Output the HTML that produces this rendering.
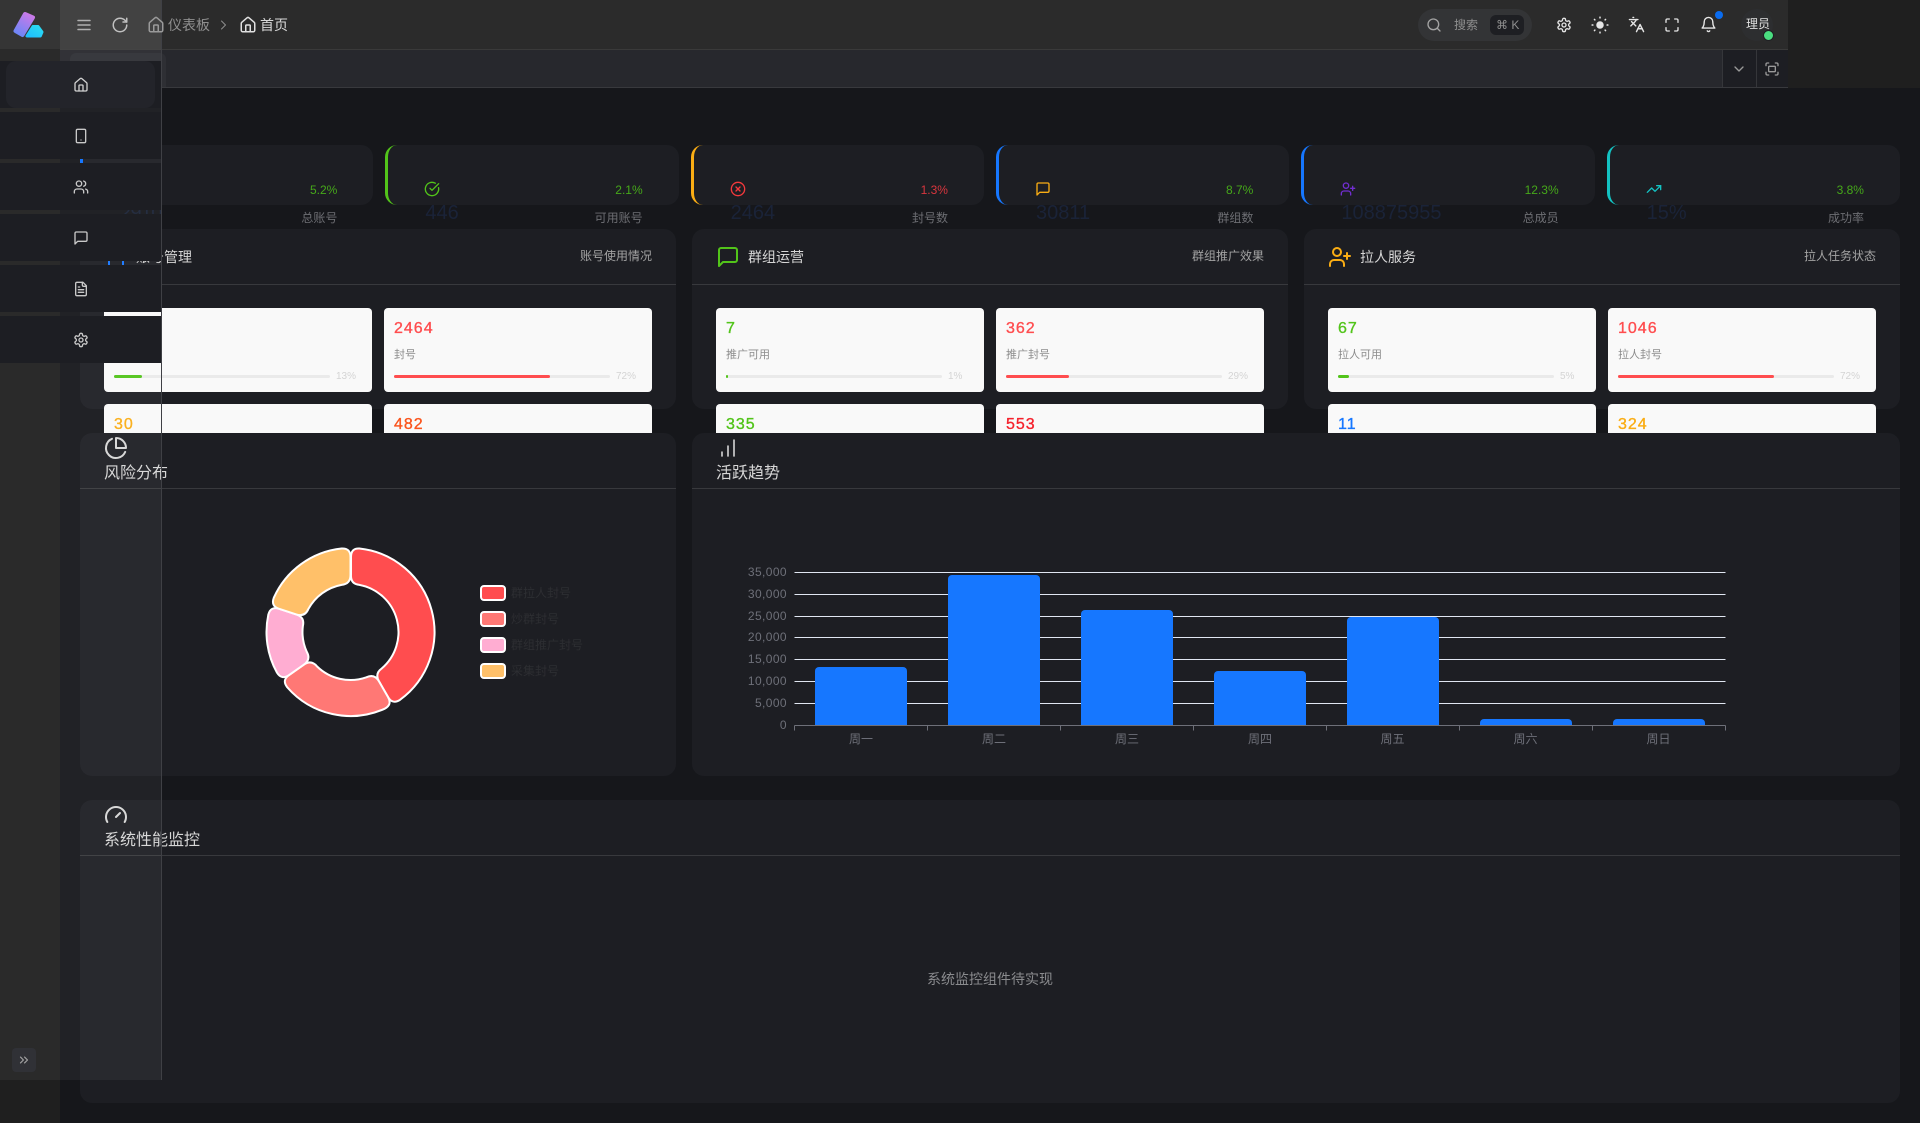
<!DOCTYPE html>
<html lang="zh-CN"><head><meta charset="utf-8"><title>仪表板</title>
<style>
*{box-sizing:border-box;margin:0;padding:0}
html,body{width:1920px;height:1123px;overflow:hidden;background:#16171b;font-family:"Liberation Sans","Noto Sans CJK SC",sans-serif}
.a{position:absolute}
.t{position:absolute;white-space:nowrap}
svg.i{position:absolute;fill:none;stroke:currentColor;stroke-width:2;stroke-linecap:round;stroke-linejoin:round}
.kpi{position:absolute;top:145px;width:293.33px;height:60px;background:#1d1e23;border-radius:12px;border-left:3px solid}
.kpi .v{position:absolute;left:37px;top:54px;font-size:20px;line-height:28px;color:#1a2338;white-space:nowrap}
.kpi .l{position:absolute;right:36px;top:64px;font-size:12px;line-height:18px;color:#6d6e73;white-space:nowrap}
.kpi .p{position:absolute;right:36px;top:35px;font-size:12px;line-height:20px;color:#46a81a;white-space:nowrap}
.kpi svg{left:36px;top:36px}
.sec{position:absolute;background:#1d1e23;border-radius:12px}
.sec .ln{position:absolute;left:0;right:0;height:1px;background:#38393d}
.st{position:absolute;font-size:14px;line-height:20px;color:#d6d6d6;white-space:nowrap}
.sr{position:absolute;right:24px;font-size:12px;line-height:18px;color:#a3a3a3;white-space:nowrap}
.ch{position:absolute;font-size:16px;line-height:24px;color:#d6d6d6;white-space:nowrap}
.c{position:absolute;width:268px;height:84px;background:#f9f9f9;border-radius:4px}
.c b{position:absolute;left:10px;top:11px;font-size:16px;line-height:20px;font-weight:400;letter-spacing:1px;-webkit-text-stroke:.35px currentColor}
.c span{position:absolute;left:10px;top:38px;font-size:11px;line-height:18px;color:#8c8c8c;white-space:nowrap}
.c i{position:absolute;left:10px;top:67px;width:216px;height:3px;background:#eaeaea;border-radius:2px;display:block}
.c i u{display:block;height:3px;border-radius:2px}
.c em{position:absolute;left:232px;top:61px;font-size:10px;line-height:16px;color:#d4d4d4;font-style:normal}
.m{position:absolute;left:0;width:161px;height:47px;background:#1d1e23}
.m svg{left:73px;top:16px;color:#c9c9c9}
.lg{position:absolute;left:479.5px;width:26px;height:16px;border:2px solid #fff;border-radius:4px}
.lt{position:absolute;left:511px;font-size:12px;line-height:16px;color:#2d2e32;white-space:nowrap}
</style></head><body>
<svg width="0" height="0" style="position:absolute"><defs>
<symbol id="home" viewBox="0 0 24 24"><path d="M15 21v-8a1 1 0 0 0-1-1h-4a1 1 0 0 0-1 1v8"/><path d="M3 10a2 2 0 0 1 .709-1.528l7-5.999a2 2 0 0 1 2.582 0l7 5.999A2 2 0 0 1 21 10v9a2 2 0 0 1-2 2H5a2 2 0 0 1-2-2z"/></symbol>
<symbol id="chat" viewBox="0 0 24 24"><path d="M21 15a2 2 0 0 1-2 2H7l-4 4V5a2 2 0 0 1 2-2h14a2 2 0 0 1 2 2z"/></symbol>
<symbol id="userplus" viewBox="0 0 24 24"><path d="M16 21v-2a4 4 0 0 0-4-4H6a4 4 0 0 0-4 4v2"/><circle cx="9" cy="7" r="4"/><line x1="19" x2="19" y1="8" y2="14"/><line x1="22" x2="16" y1="11" y2="11"/></symbol>
<symbol id="gear" viewBox="0 0 24 24"><path d="M12.22 2h-.44a2 2 0 0 0-2 2v.18a2 2 0 0 1-1 1.73l-.43.25a2 2 0 0 1-2 0l-.15-.08a2 2 0 0 0-2.73.73l-.22.38a2 2 0 0 0 .73 2.73l.15.1a2 2 0 0 1 1 1.72v.51a2 2 0 0 1-1 1.74l-.15.09a2 2 0 0 0-.73 2.73l.22.38a2 2 0 0 0 2.73.73l.15-.08a2 2 0 0 1 2 0l.43.25a2 2 0 0 1 1 1.73V20a2 2 0 0 0 2 2h.44a2 2 0 0 0 2-2v-.18a2 2 0 0 1 1-1.73l.43-.25a2 2 0 0 1 2 0l.15.08a2 2 0 0 0 2.73-.73l.22-.39a2 2 0 0 0-.73-2.73l-.15-.08a2 2 0 0 1-1-1.74v-.5a2 2 0 0 1 1-1.74l.15-.09a2 2 0 0 0 .73-2.73l-.22-.38a2 2 0 0 0-2.73-.73l-.15.08a2 2 0 0 1-2 0l-.43-.25a2 2 0 0 1-1-1.73V4a2 2 0 0 0-2-2z"/><circle cx="12" cy="12" r="3"/></symbol>
</defs></svg>

<!-- base layers -->
<div class="a" style="left:0;top:0;width:60px;height:1123px;background:#1f1f1f"></div>
<div class="a" style="left:1788px;top:0;width:132px;height:88px;background:#1f1f1f"></div>

<!-- KPI cards -->
<div class="kpi" style="left:80px;border-color:#1677ff"><div class="v" style="letter-spacing:-.7px">2910</div><div class="l">总账号</div><div class="p">5.2%</div></div>
<div class="kpi" style="left:385.33px;border-color:#52c41a"><svg class="i" width="16" height="16" viewBox="0 0 24 24" style="color:#52c41a"><path d="M21.801 10A10 10 0 1 1 17 3.335"/><path d="m9 11 3 3L22 4"/></svg><div class="v">446</div><div class="l">可用账号</div><div class="p">2.1%</div></div>
<div class="kpi" style="left:690.67px;border-color:#faad14"><svg class="i" width="16" height="16" viewBox="0 0 24 24" style="color:#f5393c"><circle cx="12" cy="12" r="10"/><path d="m15 9-6 6"/><path d="m9 9 6 6"/></svg><div class="v">2464</div><div class="l">封号数</div><div class="p" style="color:#d9363e">1.3%</div></div>
<div class="kpi" style="left:996px;border-color:#1677ff"><svg class="i" width="16" height="16" style="color:#faad14"><use href="#chat"/></svg><div class="v">30811</div><div class="l">群组数</div><div class="p">8.7%</div></div>
<div class="kpi" style="left:1301.33px;border-color:#1677ff"><svg class="i" width="16" height="16" style="color:#722ed1"><use href="#userplus"/></svg><div class="v">108875955</div><div class="l">总成员</div><div class="p">12.3%</div></div>
<div class="kpi" style="left:1606.67px;border-color:#13c2c2"><svg class="i" width="16" height="16" viewBox="0 0 24 24" style="color:#13c2c2"><polyline points="22 7 13.5 15.5 8.5 10.5 2 17"/><polyline points="16 7 22 7 22 13"/></svg><div class="v">15%</div><div class="l">成功率</div><div class="p">3.8%</div></div>

<!-- Service sections -->
<div class="sec" style="left:80px;top:229px;width:596px;height:180px">
  <div class="ln" style="top:55px"></div>
  <svg class="i" width="24" height="24" viewBox="0 0 24 24" style="left:24px;top:16px;color:#1677ff"><rect x="5" y="2" width="14" height="20" rx="2"/></svg>
  <div class="st" style="left:56px;top:18px">账号管理</div><div class="sr" style="top:18px">账号使用情况</div>
  <div class="c" style="left:24px;top:79px"><b style="color:#52c41a">380</b><span>可用</span><i><u style="width:13%;background:#52c41a"></u></i><em>13%</em></div>
  <div class="c" style="left:304px;top:79px"><b style="color:#ff4d4f">2464</b><span>封号</span><i><u style="width:72%;background:#ff4d4f"></u></i><em>72%</em></div>
  <div class="c" style="left:24px;top:175px"><b style="color:#faad14">30</b></div>
  <div class="c" style="left:304px;top:175px"><b style="color:#fa541c">482</b></div>
</div>
<div class="sec" style="left:692px;top:229px;width:596px;height:180px">
  <div class="ln" style="top:55px"></div>
  <svg class="i" width="24" height="24" style="left:24px;top:16px;color:#52c41a"><use href="#chat"/></svg>
  <div class="st" style="left:56px;top:18px">群组运营</div><div class="sr" style="top:18px">群组推广效果</div>
  <div class="c" style="left:24px;top:79px"><b style="color:#52c41a">7</b><span>推广可用</span><i><u style="width:1%;background:#52c41a"></u></i><em>1%</em></div>
  <div class="c" style="left:304px;top:79px"><b style="color:#ff4d4f">362</b><span>推广封号</span><i><u style="width:29%;background:#ff4d4f"></u></i><em>29%</em></div>
  <div class="c" style="left:24px;top:175px"><b style="color:#52c41a">335</b></div>
  <div class="c" style="left:304px;top:175px"><b style="color:#f5222d">553</b></div>
</div>
<div class="sec" style="left:1304px;top:229px;width:596px;height:180px">
  <div class="ln" style="top:55px"></div>
  <svg class="i" width="24" height="24" style="left:24px;top:16px;color:#faad14"><use href="#userplus"/></svg>
  <div class="st" style="left:56px;top:18px">拉人服务</div><div class="sr" style="top:18px">拉人任务状态</div>
  <div class="c" style="left:24px;top:79px"><b style="color:#52c41a">67</b><span>拉人可用</span><i><u style="width:5%;background:#52c41a"></u></i><em>5%</em></div>
  <div class="c" style="left:304px;top:79px"><b style="color:#ff4d4f">1046</b><span>拉人封号</span><i><u style="width:72%;background:#ff4d4f"></u></i><em>72%</em></div>
  <div class="c" style="left:24px;top:175px"><b style="color:#1677ff">11</b></div>
  <div class="c" style="left:304px;top:175px"><b style="color:#faad14">324</b></div>
</div>

<!-- Chart sections -->
<div class="sec" style="left:80px;top:433px;width:596px;height:343px">
  <div class="ln" style="top:55px"></div>
  <svg class="i" width="24" height="24" viewBox="0 0 24 24" style="left:24px;top:3px;color:#d6d6d6"><path d="M21.21 15.89A10 10 0 1 1 8 2.83"/><path d="M22 12A10 10 0 0 0 12 2v10z"/></svg>
  <div class="ch" style="left:24px;top:29px">风险分布</div>
</div>
<div class="sec" style="left:692px;top:433px;width:1208px;height:343px">
  <div class="ln" style="top:55px"></div>
  <svg class="i" width="24" height="24" viewBox="0 0 24 24" style="left:24px;top:3px;color:#d6d6d6;stroke-width:1.6"><line x1="18" x2="18" y1="20" y2="4"/><line x1="12" x2="12" y1="20" y2="10"/><line x1="6" x2="6" y1="20" y2="16"/></svg>
  <div class="ch" style="left:24px;top:29px">活跃趋势</div>
</div>
<div class="sec" style="left:80px;top:800px;width:1820px;height:303px">
  <div class="ln" style="top:55px"></div>
  <svg class="i" width="24" height="24" viewBox="0 0 24 24" style="left:24px;top:3px;color:#d6d6d6"><path d="m12 14 4-4"/><path d="M3.34 19a10 10 0 1 1 17.32 0"/></svg>
  <div class="ch" style="left:24px;top:29px">系统性能监控</div>
  <div class="t" style="left:0;width:1820px;text-align:center;top:169px;font-size:14px;line-height:20px;color:#8a8b8e">系统监控组件待实现</div>
</div>

<!-- Charts -->
<svg class="a" style="left:0;top:0" width="1920" height="1123" viewBox="0 0 1920 1123">
  <g stroke="#fff" stroke-width="2" stroke-linejoin="round">
    <path fill="#ff4d4f" d="M359.43 548.48A84 84 0 0 1 399.99 699.87Q392.5 704.75 388 696.95L379 681.36Q374.5 673.57 381.8 668.39A48 48 0 0 0 359.41 584.84Q350.5 584 351 575L351 557Q351 548 359.43 548.48Z"/>
    <path fill="#ff7875" d="M384.53 708.8A84 84 0 0 1 287.2 687.22Q281.69 680.18 289.06 675.02L303.81 664.7Q311.18 659.53 316.98 666.35A48 48 0 0 0 366.36 677.3Q374.5 673.57 379 681.36L388 696.95Q392.5 704.75 384.53 708.8Z"/>
    <path fill="#ffadd2" d="M276.96 672.6A84 84 0 0 1 268.31 614.68Q270.61 606.04 279.17 608.83L296.29 614.39Q304.85 617.17 302.89 625.9A48 48 0 0 0 306.75 651.75Q311.18 659.53 303.81 664.7L289.06 675.02Q281.69 680.18 276.96 672.6Z"/>
    <path fill="#ffc069" d="M273.82 597.7A84 84 0 0 1 341.57 548.48Q350.5 548 350.5 557L350.5 575Q350.5 584 341.59 584.84A48 48 0 0 0 308.4 608.95Q304.85 617.17 296.29 614.39L279.17 608.83Q270.61 606.04 273.82 597.7Z"/>
  </g>
  <g stroke="#e0e6f1" stroke-width="1">
    <path d="M794.5 572.5H1725.5M794.5 594.5H1725.5M794.5 616.5H1725.5M794.5 637.5H1725.5M794.5 659.5H1725.5M794.5 681.5H1725.5M794.5 703.5H1725.5"/>
  </g>
  <g fill="#1677ff">
    <path d="M815 725V671a4 4 0 0 1 4-4H903a4 4 0 0 1 4 4V725Z"/>
    <path d="M948 725V579a4 4 0 0 1 4-4H1036a4 4 0 0 1 4 4V725Z"/>
    <path d="M1081 725V614a4 4 0 0 1 4-4H1169a4 4 0 0 1 4 4V725Z"/>
    <path d="M1214 725V675a4 4 0 0 1 4-4H1302a4 4 0 0 1 4 4V725Z"/>
    <path d="M1347 725V621a4 4 0 0 1 4-4H1435a4 4 0 0 1 4 4V725Z"/>
    <path d="M1480 725V723a4 4 0 0 1 4-4H1568a4 4 0 0 1 4 4V725Z"/>
    <path d="M1613 725V723a4 4 0 0 1 4-4H1701a4 4 0 0 1 4 4V725Z"/>
  </g>
  <path stroke="#6e7079" stroke-width="1" fill="none" d="M794.5 725.5H1725.5M794.5 725.5v5M927.5 725.5v5M1060.5 725.5v5M1193.5 725.5v5M1326.5 725.5v5M1459.5 725.5v5M1592.5 725.5v5M1725.5 725.5v5"/>
  <g fill="#6e7079" font-size="12" letter-spacing=".4" font-family="'Liberation Sans','Noto Sans CJK SC',sans-serif" text-anchor="end">
    <text x="787" y="576">35,000</text><text x="787" y="598">30,000</text><text x="787" y="620">25,000</text><text x="787" y="641">20,000</text><text x="787" y="663">15,000</text><text x="787" y="685">10,000</text><text x="787" y="707">5,000</text><text x="787" y="729">0</text>
  </g>
  <g fill="#6e7079" font-size="12" font-family="'Liberation Sans','Noto Sans CJK SC',sans-serif" text-anchor="middle">
    <text x="861" y="743">周一</text><text x="994" y="743">周二</text><text x="1127" y="743">周三</text><text x="1260" y="743">周四</text><text x="1392.5" y="743">周五</text><text x="1525.5" y="743">周六</text><text x="1658.5" y="743">周日</text>
  </g>
</svg>
<div class="lg" style="top:585px;background:#ff4d4f"></div><div class="lt" style="top:585px">群拉人封号</div>
<div class="lg" style="top:611px;background:#ff7875"></div><div class="lt" style="top:611px">炒群封号</div>
<div class="lg" style="top:637px;background:#ffadd2"></div><div class="lt" style="top:637px">群组推广封号</div>
<div class="lg" style="top:663px;background:#ffc069"></div><div class="lt" style="top:663px">采集封号</div>

<!-- Header -->
<div class="a" style="left:60px;top:0;width:1728px;height:50px;background:#2b2b2b;border-bottom:1px solid #3a3a3a"></div>
<div class="a" style="left:60px;top:50px;width:1728px;height:38px;background:#27282d;border-bottom:1px solid #38393d"></div>
<div class="a" style="left:70px;top:53px;width:96px;height:34px;background:#2e2f34;border-radius:6px 6px 0 6px"></div>
<div class="a" style="left:1723px;top:50px;width:65px;height:37px;background:#1d1e23"></div>
<div class="a" style="left:1722px;top:50px;width:1px;height:37px;background:#35363a"></div>
<div class="a" style="left:1756px;top:50px;width:1px;height:37px;background:#35363a"></div>
<svg class="i" width="16" height="16" viewBox="0 0 24 24" style="left:1731px;top:61px;color:#9a9a9a"><path d="m6 9 6 6 6-6"/></svg>
<svg class="i" width="16" height="16" viewBox="0 0 24 24" style="left:1764px;top:61px;color:#9a9a9a"><path d="M3 7V5a2 2 0 0 1 2-2h2"/><path d="M17 3h2a2 2 0 0 1 2 2v2"/><path d="M21 17v2a2 2 0 0 1-2 2h-2"/><path d="M7 21H5a2 2 0 0 1-2-2v-2"/><rect x="7" y="8" width="10" height="8" rx="1"/></svg>

<!-- Overlay tints -->
<div class="a" style="left:0;top:0;width:162px;height:1080px;background:rgba(255,255,255,.05);border-right:1px solid #3f4045"></div>
<div class="a" style="left:0;top:0;width:60px;height:49px;background:#353535"></div>
<div class="a" style="left:60px;top:0;width:101px;height:49px;background:#424242"></div>

<!-- Logo -->
<svg class="a" style="left:11px;top:9px" width="36" height="32" viewBox="0 0 36 32">
  <defs>
    <linearGradient id="lp" x1="0.75" y1="0" x2="0.25" y2="1"><stop offset="0" stop-color="#c97ae8"/><stop offset="1" stop-color="#6f86f7"/></linearGradient>
    <linearGradient id="lc" x1="0" y1="1" x2="1" y2="0"><stop offset="0" stop-color="#1fbfff"/><stop offset="1" stop-color="#2bdcf0"/></linearGradient>
  </defs>
  <path d="M16 27H29.3L31 23L27 17.5H22Z" fill="url(#lc)" stroke="url(#lc)" stroke-width="3" stroke-linejoin="round"/>
  <path d="M14 5L22 8.5L11.5 26L4.5 22Z" fill="url(#lp)" stroke="url(#lp)" stroke-width="4" stroke-linejoin="round"/>
</svg>

<!-- Header left -->
<svg class="i" width="18" height="18" viewBox="0 0 24 24" style="left:75px;top:16px;color:#b0b0b0"><path d="M4 6h16M4 12h16M4 18h16"/></svg>
<svg class="i" width="18" height="18" viewBox="0 0 24 24" style="left:111px;top:16px;color:#c0c0c0"><path d="M21 12a9 9 0 1 1-9-9c2.52 0 4.93 1 6.74 2.74L21 8"/><path d="M21 3v5h-5"/></svg>
<svg class="i" width="18" height="18" style="left:147px;top:16px;color:#9a9a9a"><use href="#home"/></svg>
<div class="t" style="left:168px;top:14px;font-size:14px;line-height:22px;color:#8f8f8f">仪表板</div>
<svg class="i" width="12" height="12" viewBox="0 0 24 24" style="left:217px;top:19px;color:#8f8f8f"><path d="m9 4 8 8-8 8"/></svg>
<svg class="i" width="18" height="18" style="left:239px;top:16px;color:#e0e0e0"><use href="#home"/></svg>
<div class="t" style="left:260px;top:14px;font-size:14px;line-height:22px;color:#d9d9d9">首页</div>

<!-- Header right -->
<div class="a" style="left:1418px;top:9px;width:114px;height:32px;border-radius:16px;background:#333436"></div>
<svg class="i" width="16" height="16" viewBox="0 0 24 24" style="left:1426px;top:17px;color:#a3a3a3"><circle cx="11" cy="11" r="8"/><path d="m21 21-4.3-4.3"/></svg>
<div class="t" style="left:1454px;top:16px;font-size:12px;line-height:18px;color:#8f8f8f">搜索</div>
<div class="a" style="left:1490px;top:15px;width:34px;height:20px;border-radius:6px;background:#1e1f23"></div>
<div class="t" style="left:1496px;top:15px;font-size:12px;line-height:20px;color:#8f8f8f;font-family:'Liberation Sans','DejaVu Sans',sans-serif">⌘ K</div>
<svg class="i" width="16" height="16" style="left:1556px;top:17px;color:#e5e5e5"><use href="#gear"/></svg>
<svg class="i" width="18" height="18" viewBox="0 0 24 24" style="left:1591px;top:16px;color:#e5e5e5"><circle cx="12" cy="12" r="5" fill="currentColor" stroke="none"/><path d="M12 1.5v1M12 21.5v1M1.5 12h1M21.5 12h1M4.6 4.6l.6.6M18.8 18.8l.6.6M4.6 19.4l.6-.6M18.8 5.2l.6-.6"/></svg>
<svg class="i" width="17" height="17" viewBox="0 0 24 24" style="left:1628px;top:16px;color:#e5e5e5"><path d="m5 8 6 6"/><path d="m4 14 6-6 2-3"/><path d="M2 5h12"/><path d="M7 2h1"/><path d="m22 22-5-10-5 10"/><path d="M14 18h6"/></svg>
<svg class="i" width="16" height="16" viewBox="0 0 24 24" style="left:1664px;top:17px;color:#e5e5e5"><path d="M3 8V5a2 2 0 0 1 2-2h3"/><path d="M16 3h3a2 2 0 0 1 2 2v3"/><path d="M21 16v3a2 2 0 0 1-2 2h-3"/><path d="M8 21H5a2 2 0 0 1-2-2v-3"/></svg>
<svg class="i" width="17" height="17" viewBox="0 0 24 24" style="left:1699.5px;top:16px;color:#e5e5e5"><path d="M6 8a6 6 0 0 1 12 0c0 7 3 9 3 9H3s3-2 3-9"/><path d="M10.3 21a1.94 1.94 0 0 0 3.4 0"/></svg>
<div class="a" style="left:1714.5px;top:11px;width:8px;height:8px;border-radius:50%;background:#0a6cf0"></div>
<div class="a" style="left:1741px;top:9px;width:32px;height:32px;border-radius:50%;background:#2d2e30"></div>
<div class="t" style="left:1746px;top:15px;font-size:12px;line-height:18px;color:#e0e0e0">理员</div>
<div class="a" style="left:1762.5px;top:29.5px;width:11px;height:11px;border-radius:50%;background:#4ade80;border:1.5px solid #1f2023"></div>

<!-- Sidebar items -->
<div class="m" style="top:61px"><div class="a" style="left:6px;top:0;width:149px;height:47px;background:#23242a;border-radius:10px"></div><svg class="i" width="16" height="16" style="color:#d0d0d0"><use href="#home"/></svg></div>
<div class="m" style="top:112px"><svg class="i" width="16" height="16" viewBox="0 0 24 24"><rect x="5" y="2" width="14" height="20" rx="2"/><path d="M12 18h.01"/></svg></div>
<div class="m" style="top:163px"><svg class="i" width="16" height="16" viewBox="0 0 24 24"><path d="M16 21v-2a4 4 0 0 0-4-4H6a4 4 0 0 0-4 4v2"/><circle cx="9" cy="7" r="4"/><path d="M22 21v-2a4 4 0 0 0-3-3.87"/><path d="M16 3.13a4 4 0 0 1 0 7.75"/></svg></div>
<div class="m" style="top:214px"><svg class="i" width="16" height="16"><use href="#chat"/></svg></div>
<div class="m" style="top:265px"><svg class="i" width="16" height="16" viewBox="0 0 24 24"><path d="M15 2H6a2 2 0 0 0-2 2v16a2 2 0 0 0 2 2h12a2 2 0 0 0 2-2V7Z"/><path d="M14 2v4a2 2 0 0 0 2 2h4"/><path d="M10 9H8"/><path d="M16 13H8"/><path d="M16 17H8"/></svg></div>
<div class="m" style="top:316px"><svg class="i" width="16" height="16"><use href="#gear"/></svg></div>
<div class="a" style="left:80px;top:159px;width:3px;height:4px;background:#1677ff"></div>

<!-- Collapse -->
<div class="a" style="left:12px;top:1048px;width:24px;height:24px;border-radius:4px;background:#303136"></div>
<svg class="i" width="14" height="14" viewBox="0 0 24 24" style="left:17px;top:1053px;color:#a3a3a3"><path d="m6 17 5-5-5-5"/><path d="m13 17 5-5-5-5"/></svg>
</body></html>
